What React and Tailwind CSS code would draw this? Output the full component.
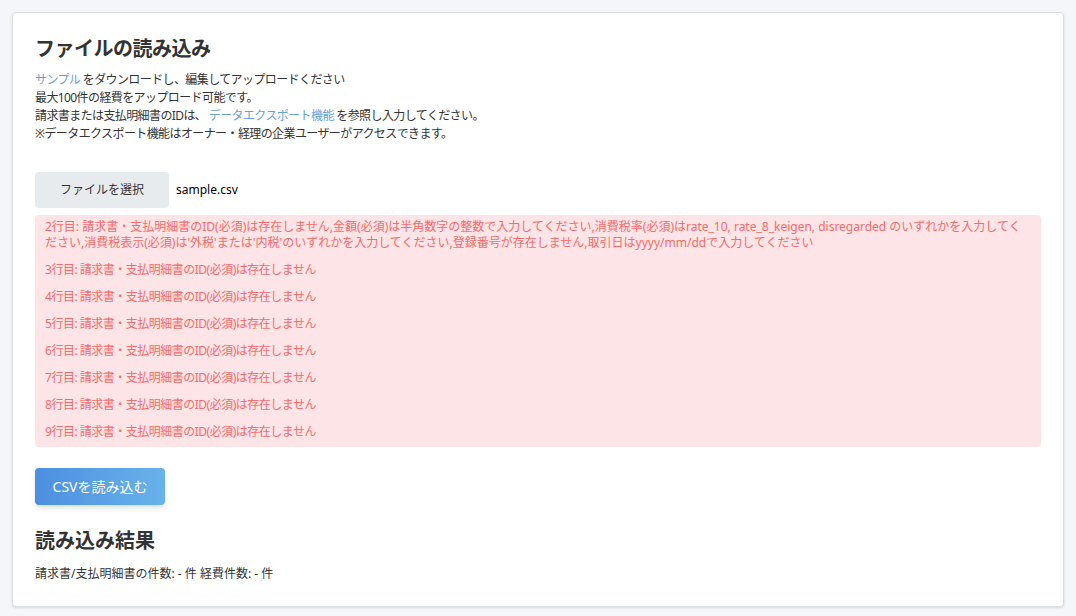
const rows = [3, 4, 5, 6, 7, 8, 9];

export default function App() {
  return (
    <div
      className="min-h-screen bg-[#f5f6fa] p-3 text-[#333]"
      style={{ fontFamily: '"Noto Sans", "Noto Sans CJK JP", sans-serif' }}
    >
      <div className="rounded border border-[#dcdfe6] bg-white px-[22px] pt-[22px] pb-[23px] shadow-sm">
        <h1 className="text-[20px] font-bold leading-[28px] tracking-[-0.5px]">ファイルの読み込み</h1>
        <div className="mt-[8px] text-[12px] leading-[18px] tracking-[-0.6px]">
          <p>
            <span className="text-[#6b9fdc]">サンプル</span> をダウンロードし、編集してアップロードください
          </p>
          <p>最大100件の経費をアップロード可能です。</p>
          <p>
            請求書または支払明細書のIDは、 <span className="text-[#6b9fdc]">データエクスポート機能</span> を参照し入力してください。
          </p>
          <p>※データエクスポート機能はオーナー・経理の企業ユーザーがアクセスできます。</p>
        </div>

        <div className="mt-[29px] flex items-center gap-[7px]">
          <button className="h-[36px] w-[134px] rounded bg-[#e8ebee] text-[12px] text-[#333]">
            ファイルを選択
          </button>
          <span className="text-[12px] text-black">sample.csv</span>
        </div>

        <div className="mt-[7px] flex flex-col gap-[11px] rounded bg-[#fde4e6] pt-[4px] pb-[7px] pl-[10px] pr-[12px] text-[12px] leading-[16px] text-[#f56c6c]">
          <p>
            2行目: 請求書・支払明細書のID(必須)は存在しません,金額(必須)は半角数字の整数で入力してください,消費税率(必須)はrate_10, rate_8_keigen, disregarded のいずれかを入力してください,消費税表示(必須)は'外税'または'内税'のいずれかを入力してください,登録番号が存在しません,取引日はyyyy/mm/ddで入力してください
          </p>
          {rows.map((r) => (
            <p key={r} className="tracking-[-0.5px]">
              {r}行目: 請求書・支払明細書のID(必須)は存在しません
            </p>
          ))}
        </div>

        <button className="mt-[21px] h-[37px] w-[130px] rounded bg-gradient-to-r from-[#4c8fe0] to-[#68b3ea] text-[14px] text-white shadow-md">
          CSVを読み込む
        </button>

        <h2 className="mt-[22px] text-[20px] font-bold leading-[28px]">読み込み結果</h2>
        <p className="mt-[10px] text-[12px] leading-[18px]">請求書/支払明細書の件数: - 件 経費件数: - 件</p>
      </div>
    </div>
  );
}
